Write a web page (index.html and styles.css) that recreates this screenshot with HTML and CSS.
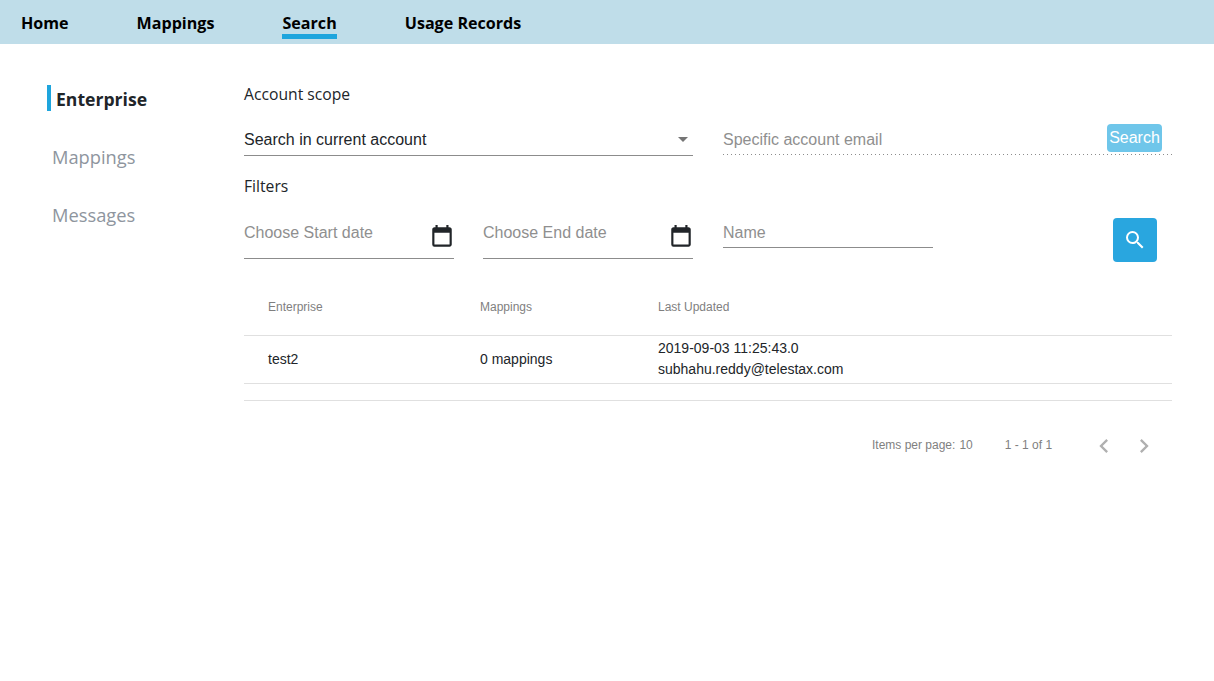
FILE: index.html
```html
<!DOCTYPE html>
<html lang="en">
<head>
<meta charset="utf-8">
<title>Search</title>
<link rel="stylesheet" href="styles.css">
</head>
<body>
<header class="topbar">
  <a class="tab">Home</a>
  <a class="tab">Mappings</a>
  <a class="tab tab-active">Search</a>
  <a class="tab">Usage Records</a>
</header>
<div class="page">
  <nav class="side">
    <a class="side-item side-active">Enterprise</a>
    <a class="side-item">Mappings</a>
    <a class="side-item">Messages</a>
  </nav>
  <main class="main">
    <h2 class="label label-scope">Account scope</h2>
    <div class="scope-row">
      <div class="select">
        <span>Search in current account</span>
        <svg class="caret" width="10" height="5" viewBox="0 0 10 5"><path d="M0 0h10L5 5z" fill="#757575"/></svg>
      </div>
      <div class="email">
        <span class="ph">Specific account email</span>
        <button class="email-btn">Search</button>
      </div>
    </div>
    <h2 class="label label-filters">Filters</h2>
    <div class="filter-row">
      <div class="date">
        <span class="ph">Choose Start date</span>
        <svg class="cal" width="26" height="26" viewBox="0 0 24 24"><path fill="#212529" d="M19 3h-1V1h-2v2H8V1H6v2H5c-1.11 0-2 .9-2 2v14a2 2 0 0 0 2 2h14c1.1 0 2-.9 2-2V5c0-1.1-.9-2-2-2zm0 16H5V8h14v11z"/></svg>
      </div>
      <div class="date">
        <span class="ph">Choose End date</span>
        <svg class="cal" width="26" height="26" viewBox="0 0 24 24"><path fill="#212529" d="M19 3h-1V1h-2v2H8V1H6v2H5c-1.11 0-2 .9-2 2v14a2 2 0 0 0 2 2h14c1.1 0 2-.9 2-2V5c0-1.1-.9-2-2-2zm0 16H5V8h14v11z"/></svg>
      </div>
      <div class="name"><span class="ph">Name</span></div>
      <button class="go">
        <svg width="24" height="24" viewBox="0 0 24 24"><path fill="#fff" d="M15.5 14h-.79l-.28-.27A6.47 6.47 0 0 0 16 9.5 6.5 6.5 0 1 0 9.5 16c1.61 0 3.09-.59 4.23-1.57l.27.28v.79l5 4.99L20.49 19l-4.99-5zm-6 0C7.01 14 5 11.99 5 9.5S7.01 5 9.5 5 14 7.01 14 9.5 11.99 14 9.5 14z"/></svg>
      </button>
    </div>
    <div class="table">
      <div class="tr thead">
        <div class="c1">Enterprise</div>
        <div class="c2">Mappings</div>
        <div class="c3">Last Updated</div>
      </div>
      <div class="tr tbody">
        <div class="c1">test2</div>
        <div class="c2">0 mappings</div>
        <div class="c3 c3-body">2019-09-03 11:25:43.0<br>subhahu.reddy@telestax.com</div>
      </div>
      <div class="spacer"></div>
    </div>
    <div class="pager">
      <span class="per">Items per page:</span>
      <span class="size">10</span>
      <span class="range">1 - 1 of 1</span>
      <svg class="chev" width="28" height="28" viewBox="0 0 24 24"><path fill="#b0b0b0" d="M15.41 7.41 14 6l-6 6 6 6 1.41-1.41L10.83 12z"/></svg>
      <svg class="chev chev-next" width="28" height="28" viewBox="0 0 24 24"><path fill="#b0b0b0" d="M10 6 8.59 7.41 13.17 12l-4.58 4.59L10 18l6-6z"/></svg>
    </div>
  </main>
</div>
</body>
</html>
```
FILE: styles.css
```css
* { box-sizing: border-box; }
html, body { margin: 0; padding: 0; background: #fff; }
body { font-family: "Liberation Sans", Arial, sans-serif; color: #212529; height: 681px; overflow: hidden; }

.topbar { display: flex; gap: 68px; height: 44px; padding-left: 21px; background: #bfdde9; }
.tab { display: block; height: 39px; padding-top: 10px; font: 700 16.1px/27px "Open Sans", sans-serif; color: #000; }
.tab-active { border-bottom: 5px solid #1ea5dd; }

.page { display: flex; }
.side { width: 244px; padding: 41px 0 0 47px; flex: none; display: flex; flex-direction: column; gap: 32px; }
.side-item { display: block; height: 26px; padding-left: 5px; font: 400 18.3px/28px "Open Sans", sans-serif; color: #8e959e; }
.side-active { border-left: 4px solid #1ea5dd; font-size: 17.6px; font-weight: 700; color: #212529; }

.main { width: 928px; flex: none; }
.label { margin: 0; font: 500 15.7px/20px "Open Sans", sans-serif; color: #212529; }
.label-scope { margin-top: 40px; }
.label-filters { margin-top: 20px; }

.scope-row { display: flex; gap: 30px; margin-top: 21px; height: 31px; }
.select { width: 449px; height: 31px; border-bottom: 1px solid #8c8c8c; display: flex; justify-content: space-between; align-items: center; font-size: 16px; padding-right: 5px; }
.caret { margin-top: -1px; }
.email { flex: 1; height: 30px; background: linear-gradient(to right, #8c8c8c 1px, transparent 1px) left bottom / 4px 1px repeat-x; display: flex; align-items: center; justify-content: space-between; padding-right: 10px; }
.email-btn { height: 28px; width: 55px; margin-top: -5px; padding: 0; border: 0; border-radius: 4px; background: #6fc6ea; color: #fff; font: 16px "Liberation Sans", Arial, sans-serif; }
.ph { color: #8f8f8f; font-size: 16px; }

.filter-row { display: flex; margin-top: 13px; height: 60px; }
.date { width: 210px; height: 50px; margin-right: 29px; border-bottom: 1px solid #8c8c8c; display: flex; justify-content: space-between; align-items: flex-start; padding-top: 15px; }
.date:nth-child(2) { margin-right: 30px; }
.cal { margin-right: -1px; }
.name { width: 210px; height: 39px; border-bottom: 1px solid #8c8c8c; padding-top: 15px; }
.go { margin-left: auto; margin-right: 15px; margin-top: 9px; width: 44px; height: 44px; padding: 0; border: 0; border-radius: 4px; background: #29a6df; display: flex; align-items: center; justify-content: center; }

.table { margin-top: 7px; }
.tr { display: flex; }
.c1 { width: 236px; padding-left: 24px; }
.c2 { width: 178px; }
.c3 { flex: 1; }
.c3-body { margin-bottom: 2px; }
.thead { height: 60px; align-items: center; border-bottom: 1px solid #e0e0e0; font-size: 12px; color: #7f7f7f; padding-top: 2px; }
.tbody { height: 48px; align-items: center; border-bottom: 1px solid #e0e0e0; font-size: 14px; line-height: 21px; color: #212529; }
.spacer { height: 17px; border-bottom: 1px solid #e0e0e0; }

.pager { display: flex; align-items: center; height: 24px; margin-top: 32px; font-size: 12px; color: #7f7f7f; }
.per { margin-left: 628px; }
.size { margin-left: 4px; }
.range { margin-left: 32px; }
.chev { margin-left: 38px; margin-top: 2px; flex: none; }
.chev-next { margin-left: 12px; }
```
